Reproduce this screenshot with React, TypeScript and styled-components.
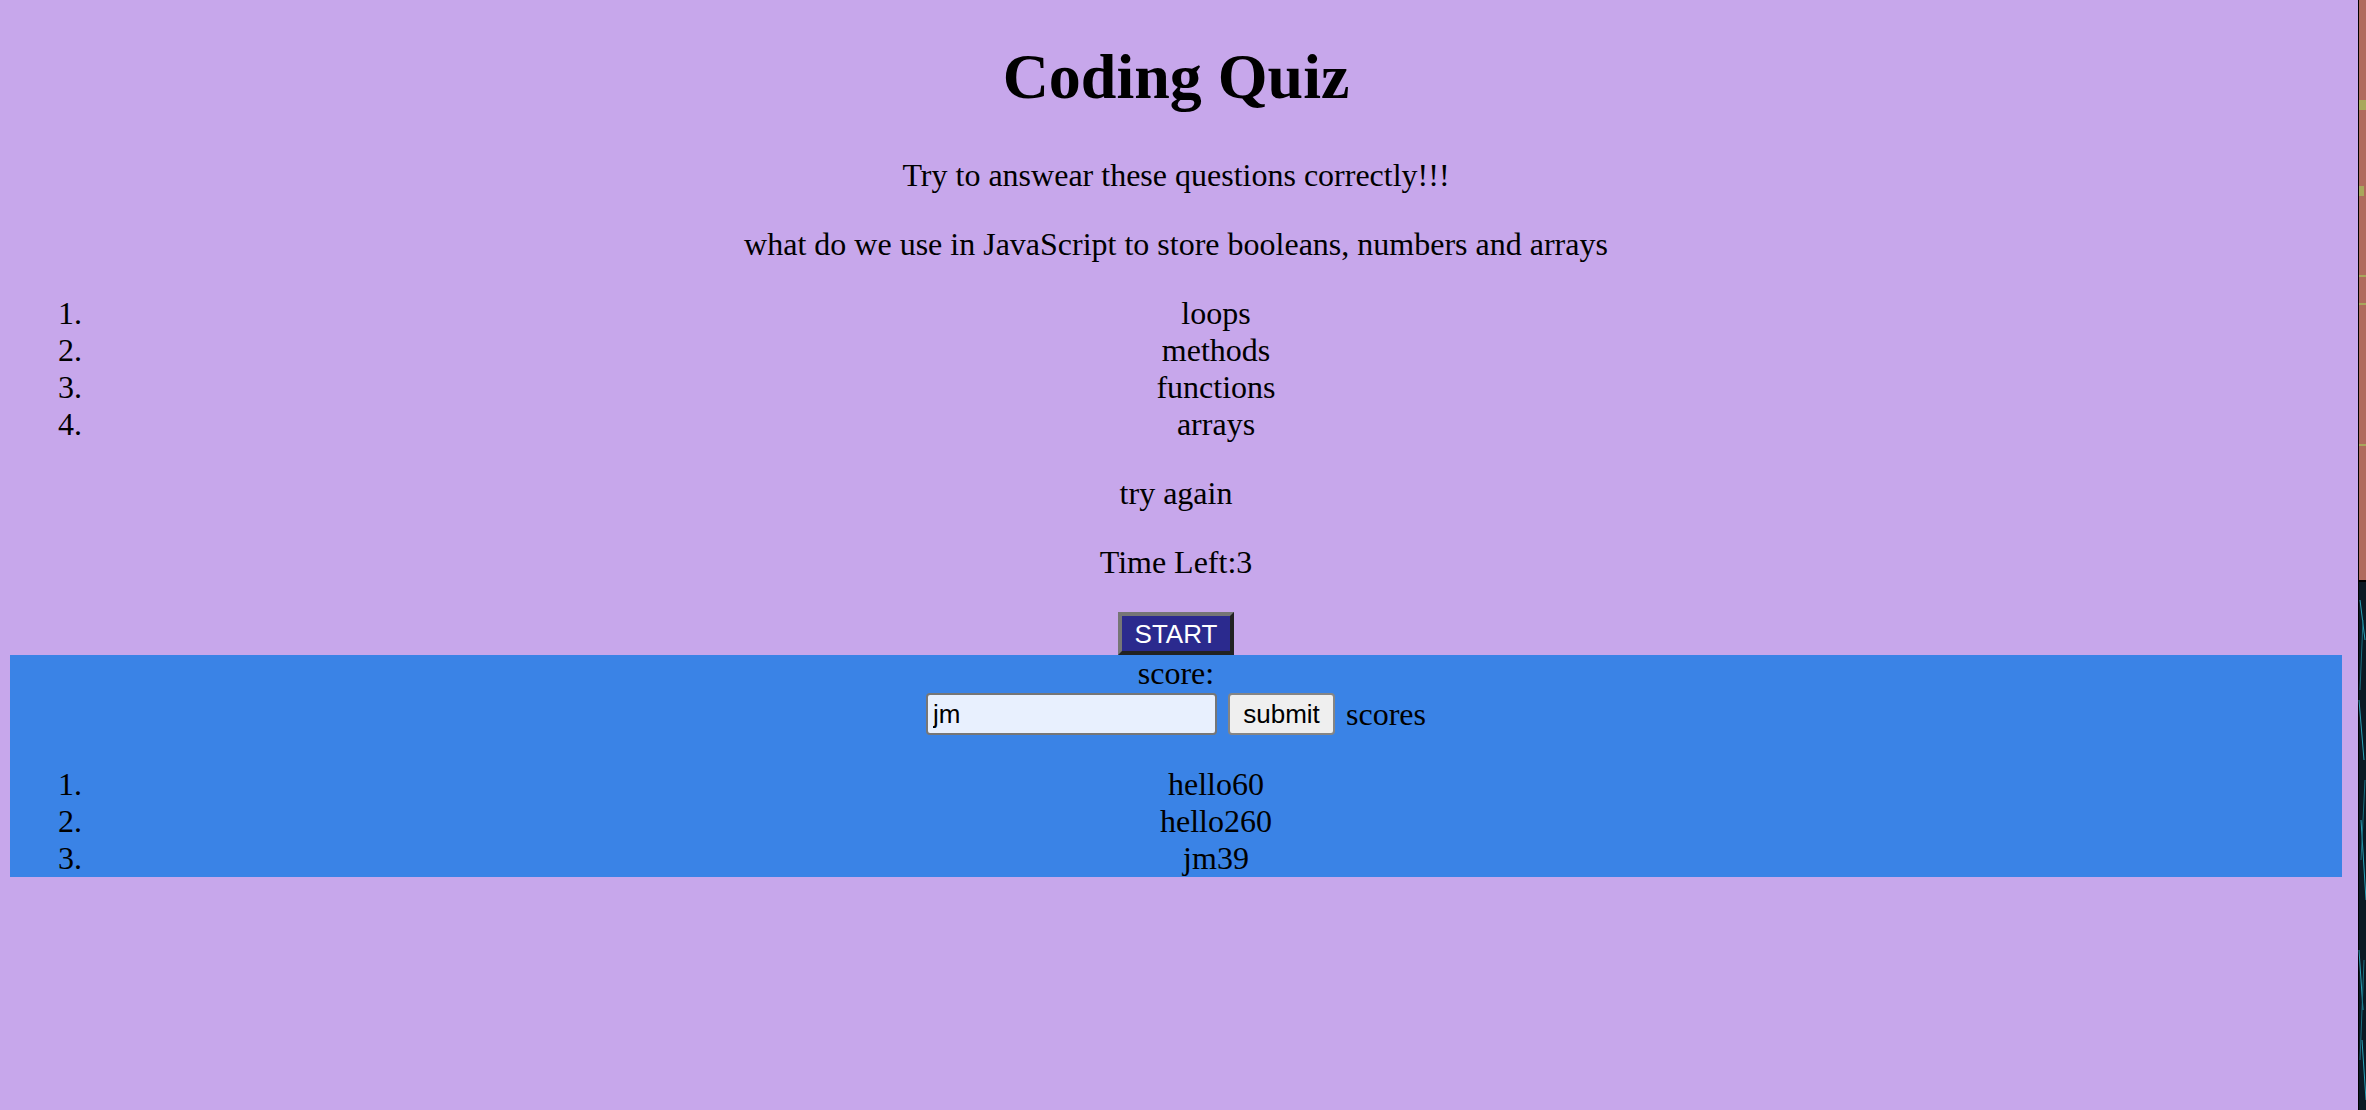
import React from "react";
import styled, { createGlobalStyle } from "styled-components";

const GlobalStyle = createGlobalStyle`
  html, body {
    margin: 0;
    padding: 0;
    background: #c7a7eb;
  }
  body {
    font-family: "Liberation Serif", "Times New Roman", serif;
    color: #000;
  }
`;

const Shell = styled.div`
  display: flex;
  width: 2366px;
  min-height: 1110px;
  overflow: hidden;
`;

const Page = styled.main`
  flex: 0 0 2358px;
  box-sizing: border-box;
  padding: 0 16px 0 10px;
  background: #c7a7eb;
  text-align: center;
  font-size: 32px;
  line-height: 37px;
  display: flow-root;
`;

const Title = styled.h1`
  margin: 40px 0 43px;
  font-size: 64px;
  line-height: 74px;
  font-weight: bold;
`;

const Text = styled.p<{ $bottom?: number }>`
  margin: 0 0 ${(p) => (p.$bottom ?? 32)}px;
`;

const List = styled.ol<{ $top?: number; $bottom?: number }>`
  margin: ${(p) => (p.$top ?? 0)}px 0 ${(p) => (p.$bottom ?? 32)}px;
  padding: 0 0 0 80px;
`;

const Item = styled.li`
  text-align: center;
`;

const ButtonRow = styled.div`
  display: flex;
  justify-content: center;
`;

const StartButton = styled.button`
  box-sizing: border-box;
  width: 116px;
  height: 43px;
  padding: 0 10px;
  background: #2b2a8e;
  color: #fff;
  font-family: "Liberation Sans", Arial, sans-serif;
  font-size: 26px;
  line-height: 1;
  border-style: solid;
  border-width: 4px;
  border-color: #767676 #222 #222 #767676;
  cursor: pointer;
`;

const ScoreBoard = styled.section`
  background: #3a83e6;
  display: flow-root;
`;

const ScoreLabel = styled.div`
  height: 37px;
`;

const ScoreRow = styled.form`
  display: flex;
  justify-content: center;
  align-items: flex-end;
  gap: 11px;
  margin: 0;
  height: 43px;
`;

const NameInput = styled.input`
  box-sizing: border-box;
  width: 291px;
  height: 42px;
  padding: 0 5px;
  border: 2px solid #767676;
  border-radius: 4px;
  background: #e8f0fe;
  font-family: "Liberation Sans", Arial, sans-serif;
  font-size: 26px;
  color: #000;
  outline: none;
`;

const SubmitButton = styled.button`
  box-sizing: border-box;
  width: 107px;
  height: 42px;
  padding: 0;
  border: 2px solid #858585;
  border-radius: 4px;
  background: #efefef;
  font-family: "Liberation Sans", Arial, sans-serif;
  font-size: 26px;
  color: #000;
`;

const ScoresWord = styled.span`
  align-self: center;
  line-height: 37px;
  padding-top: 2px;
`;

const Strip = styled.svg`
  flex: 0 0 8px;
  display: block;
`;

const questionAnswers = ["loops", "methods", "functions", "arrays"];
const highScores = ["hello60", "hello260", "jm39"];

export default function App() {
  return (
    <>
      <GlobalStyle />
      <Shell>
        <Page>
          <Title>Coding Quiz</Title>
          <Text>Try to answear these questions correctly!!!</Text>
          <Text>what do we use in JavaScript to store booleans, numbers and arrays</Text>
          <List>
            {questionAnswers.map((a) => (
              <Item key={a}>{a}</Item>
            ))}
          </List>
          <Text>try again</Text>
          <Text $bottom={31}>Time Left:3</Text>
          <ButtonRow>
            <StartButton type="button">START</StartButton>
          </ButtonRow>
          <ScoreBoard>
            <ScoreLabel>score:</ScoreLabel>
            <ScoreRow onSubmit={(e) => e.preventDefault()}>
              <NameInput defaultValue="jm" />
              <SubmitButton type="submit">submit</SubmitButton>
              <ScoresWord>scores</ScoresWord>
            </ScoreRow>
            <List $top={31} $bottom={0}>
              {highScores.map((s) => (
                <Item key={s}>{s}</Item>
              ))}
            </List>
          </ScoreBoard>
        </Page>
        <Strip width="8" height="1110" viewBox="0 0 8 1110">
          <rect x="0" y="0" width="8" height="1110" fill="#0b1a24" />
          <rect x="0" y="0" width="1" height="1110" fill="#000" />
          <rect x="1" y="0" width="7" height="580" fill="#b06b5d" />
          <rect x="1" y="100" width="7" height="10" fill="#a9a85c" />
          <rect x="1" y="186" width="5" height="10" fill="#a9a85c" />
          <rect x="1" y="275" width="7" height="2" fill="#a9a85c" />
          <rect x="1" y="303" width="7" height="2" fill="#a9a85c" />
          <rect x="1" y="444" width="7" height="2" fill="#a9a85c" />
          <rect x="1" y="580" width="7" height="2" fill="#000" />
          <path d="M2 600 L7 640 M1 700 L6 760 M3 820 L8 900 M1 950 L5 1010 M4 1040 L8 1100" stroke="#2aa0b5" strokeWidth="1" />
          <path d="M5 620 L2 690 M7 780 L3 860 M6 960 L2 1060" stroke="#1c6f80" strokeWidth="1" />
        </Strip>
      </Shell>
    </>
  );
}
